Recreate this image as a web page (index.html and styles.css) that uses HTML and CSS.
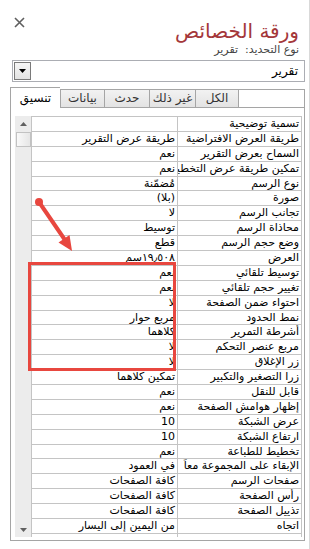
FILE: index.html
```html
<!DOCTYPE html>
<html lang="ar" dir="rtl">
<head>
  <meta charset="UTF-8">
  <meta name="viewport" content="width=device-width, initial-scale=1.0">
  <title>ورقة الخصائص</title>
  <link rel="stylesheet" href="styles.css">
</head>
<body>
  <div class="pane">
    <!-- رأس الجزء: العنوان ونوع التحديد وزر الإغلاق -->
    <div class="pane-top">
      <div class="pane-title">
        <div class="title">ورقة الخصائص</div>
        <div class="selection">نوع التحديد:&nbsp; تقرير</div>
      </div>
      <span class="close">
        <svg width="11" height="11" viewBox="0 0 11 11"><path d="M1 1L10 10M10 1L1 10" stroke="#5f5f5f" stroke-width="1.6"/></svg>
      </span>
    </div>

    <!-- قائمة الكائن المحدد -->
    <div class="combo">
      <span class="combo-text">تقرير</span>
      <span class="combo-btn">
        <svg width="7" height="4" viewBox="0 0 7 4"><path d="M0 0H7L3.5 4Z" fill="#000"/></svg>
      </span>
    </div>

    <!-- الورقة: علامات التبويب والشبكة -->
    <div class="sheet">
      <div class="tabs" dir="ltr">
        <div class="tab active">تنسيق</div>
        <div class="tab">بيانات</div>
        <div class="tab">حدث</div>
        <div class="tab">غير ذلك</div>
        <div class="tab">الكل</div>
        <div class="tab-fill"></div>
      </div>
      <div class="sheet-body">
        <div class="grid-wrap">
          <div class="grid" id="grid"></div>
          <div class="scrollbar">
            <span class="sb-arrow up"><svg width="7" height="4" viewBox="0 0 7 4"><path d="M0 4H7L3.5 0Z" fill="#606060"/></svg></span>
            <span class="sb-thumb"></span>
            <span class="sb-arrow down"><svg width="7" height="4" viewBox="0 0 7 4"><path d="M0 0H7L3.5 4Z" fill="#606060"/></svg></span>
          </div>
        </div>
      </div>
    </div>
  </div>

  <!-- التعليق التوضيحي الأحمر فوق الشبكة -->
  <svg class="markup" width="310" height="549" viewBox="0 0 310 549">
    <rect x="29.5" y="263.5" width="145" height="106" fill="none" stroke="#e8473f" stroke-width="3"/>
    <circle cx="39" cy="202" r="4" fill="#e8473f"/>
    <line x1="39" y1="202" x2="65" y2="240" stroke="#e8473f" stroke-width="4" stroke-linecap="round"/>
    <polygon points="72,251 58.5,242.5 69.5,235" fill="#e8473f"/>
  </svg>

  <script>
    // خصائص التنسيق للتقرير
    const props = [
      ["تسمية توضيحية", ""],
      ["طريقة العرض الافتراضية", "طريقة عرض التقرير"],
      ["السماح بعرض التقرير", "نعم"],
      ["تمكين طريقة عرض التخطيط", "نعم"],
      ["نوع الرسم", "مُضمّنة"],
      ["صورة", "(بلا)"],
      ["تجانب الرسم", "لا"],
      ["محاذاة الرسم", "توسيط"],
      ["وضع حجم الرسم", "قطع"],
      ["العرض", "١٩٫٥٠٨سم"],
      ["توسيط تلقائي", "نعم"],
      ["تغيير حجم تلقائي", "نعم"],
      ["احتواء ضمن الصفحة", "لا"],
      ["نمط الحدود", "مربع حوار"],
      ["أشرطة التمرير", "كلاهما"],
      ["مربع عنصر التحكم", "لا"],
      ["زر الإغلاق", "لا"],
      ["زرا التصغير والتكبير", "تمكين كلاهما"],
      ["قابل للنقل", "نعم"],
      ["إظهار هوامش الصفحة", "نعم"],
      ["عرض الشبكة", "10"],
      ["ارتفاع الشبكة", "10"],
      ["تخطيط للطباعة", "نعم"],
      ["الإبقاء على المجموعة معاً", "في العمود"],
      ["صفحات الرسم", "كافة الصفحات"],
      ["رأس الصفحة", "كافة الصفحات"],
      ["تذييل الصفحة", "كافة الصفحات"],
      ["اتجاه", "من اليمين إلى اليسار"],
      ["", ""]
    ];
    const grid = document.getElementById("grid");
    props.forEach(([name, value]) => {
      const row = document.createElement("div");
      row.className = "row";
      const label = document.createElement("div");
      label.className = "cell label";
      label.textContent = name;
      const val = document.createElement("div");
      val.className = "cell value";
      val.textContent = value;
      row.append(label, val);
      grid.appendChild(row);
    });
  </script>
</body>
</html>
```

FILE: styles.css
```css
html, body {
  margin: 0;
  padding: 0;
  background: #fff;
}
body {
  width: 310px;
  height: 549px;
  overflow: hidden;
  position: relative;
  font-family: "DejaVu Sans", sans-serif;
  color: #000;
}
.pane {
  box-sizing: border-box;
  width: 308px;
  height: 549px;
  border-right: 1px solid #d9d9d9;
  padding: 0 4px 0 8px;
  display: flex;
  flex-direction: column;
}
/* رأس الجزء */
.pane-top {
  display: flex;
  justify-content: space-between;
  align-items: flex-start;
  padding: 19px 6px 0 0;
}
.title {
  font-size: 20px;
  line-height: 24px;
  color: #a4373a;
}
.selection {
  font-size: 11px;
  line-height: 13px;
  color: #444;
}
.close {
  display: flex;
  margin: -2px 0 0 4px;
}
/* القائمة المنسدلة */
.combo {
  box-sizing: border-box;
  height: 22px;
  margin: 4px 0 0 2px;
  border: 1px solid #abadb3;
  display: flex;
  align-items: center;
  justify-content: space-between;
  padding: 0 6px 0 1px;
}
.combo-text {
  font-size: 12px;
}
.combo-btn {
  box-sizing: border-box;
  width: 17px;
  height: 18px;
  border: 1px solid #7a7a7a;
  background: linear-gradient(#f6f6f6, #e2e2e2);
  display: flex;
  align-items: center;
  justify-content: center;
}
/* الورقة وعلامات التبويب */
.sheet {
  margin-top: 5px;
  display: flex;
  flex-direction: column;
}
.tabs {
  display: flex;
  align-items: flex-end;
  height: 21px;
}
.tab {
  box-sizing: border-box;
  height: 19px;
  border: 1px solid #a5a5a5;
  border-right: none;
  background: linear-gradient(#f2f2f2, #e3e3e3);
  font-size: 12px;
  line-height: 17px;
  color: #333;
  text-align: center;
  direction: rtl;
}
.tab:nth-child(2) { width: 44px; }
.tab:nth-child(3) { width: 45px; }
.tab:nth-child(4) { width: 46px; }
.tab:nth-child(5) { width: 44px; border-right: 1px solid #a5a5a5; }
.tab.active {
  width: 50px;
  height: 21px;
  background: #fff;
  border-bottom: none;
  color: #000;
  line-height: 20px;
}
.tab-fill {
  flex: 1;
  box-sizing: border-box;
  height: 19px;
  border-top: 1px solid #a5a5a5;
  border-bottom: 1px solid #a5a5a5;
  border-right: 1px solid #a5a5a5;
}
.sheet-body {
  border: 1px solid #a5a5a5;
  border-top: none;
  padding: 8px 2px 3px 4px;
}
.grid-wrap {
  height: 421px;
  overflow: hidden;
  display: flex;
}
/* شبكة الخصائص */
.grid {
  flex: 1;
  border-top: 1px solid #c4c4c4;
  border-right: 1px solid #c4c4c4;
  border-left: 1px solid #c4c4c4;
}
.row {
  box-sizing: border-box;
  height: 14.9px;
  display: flex;
  border-bottom: 1px solid #c4c4c4;
}
.cell {
  font-size: 11px;
  line-height: 14px;
  white-space: nowrap;
  overflow: hidden;
  padding: 0 2px;
}
.label {
  width: 119px;
  flex: none;
  border-left: 1px solid #c4c4c4;
}
.value {
  flex: 1;
}
/* شريط التمرير */
.scrollbar {
  width: 16px;
  flex: none;
  background: #ececec;
  display: flex;
  flex-direction: column;
  align-items: center;
}
.sb-arrow {
  display: flex;
  height: 16px;
  align-items: center;
}
.sb-thumb {
  box-sizing: border-box;
  width: 15px;
  height: 15px;
  margin-left: 1px;
  border: 1px solid #c2c2c2;
  background: linear-gradient(to right, #f9f9f9, #e6e6e6);
}
.sb-arrow.down {
  margin-top: auto;
  height: 14px;
}
/* التعليق التوضيحي */
.markup {
  position: absolute;
  left: 0;
  top: 0;
  pointer-events: none;
}
```
